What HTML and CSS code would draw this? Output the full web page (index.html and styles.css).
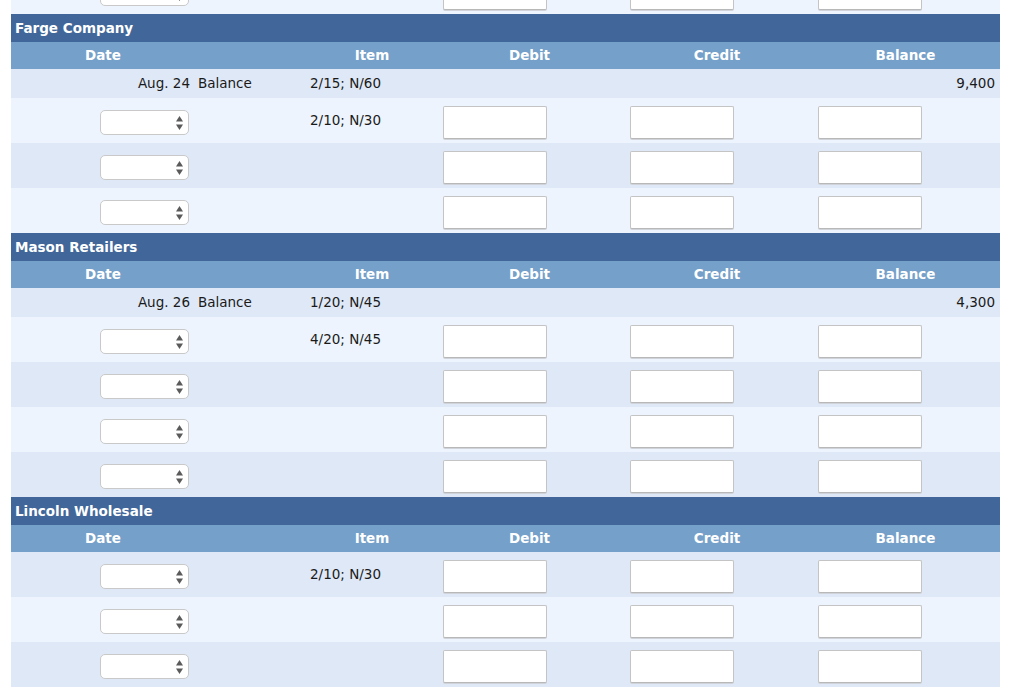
FILE: index.html
```html
<!DOCTYPE html>
<html>
<head>
<meta charset="utf-8">
<link rel="stylesheet" href="styles.css">
</head>
<body>
<div class="page">
  <!-- tail of previous ledger -->
  <div class="ledger ledger-prev">
    <div class="row input-row light">
      <div class="cell date"><div class="select"><svg width="7" height="14" viewBox="0 0 7 14"><polygon points="3.5,0 7,5.5 0,5.5" fill="#5a5a5a"/><polygon points="0,8.5 7,8.5 3.5,14" fill="#5a5a5a"/></svg></div></div>
      <div class="cell expl"></div>
      <div class="cell item"></div>
      <div class="cell amt"><div class="input"></div></div>
      <div class="cell amt"><div class="input"></div></div>
      <div class="cell amt"><div class="input"></div></div>
    </div>
  </div>

  <div class="ledger">
    <div class="title">Farge Company</div>
    <div class="row head">
      <div class="cell date">Date</div>
      <div class="cell expl"></div>
      <div class="cell item">Item</div>
      <div class="cell amt">Debit</div>
      <div class="cell amt">Credit</div>
      <div class="cell amt">Balance</div>
    </div>
    <div class="row bal-row dark">
      <div class="cell date">Aug. 24</div>
      <div class="cell expl">Balance</div>
      <div class="cell item">2/15; N/60</div>
      <div class="cell amt"></div>
      <div class="cell amt"></div>
      <div class="cell amt num">9,400</div>
    </div>
    <div class="row input-row light">
      <div class="cell date"><div class="select"><svg width="7" height="14" viewBox="0 0 7 14"><polygon points="3.5,0 7,5.5 0,5.5" fill="#5a5a5a"/><polygon points="0,8.5 7,8.5 3.5,14" fill="#5a5a5a"/></svg></div></div>
      <div class="cell expl"></div>
      <div class="cell item">2/10; N/30</div>
      <div class="cell amt"><div class="input"></div></div>
      <div class="cell amt"><div class="input"></div></div>
      <div class="cell amt"><div class="input"></div></div>
    </div>
    <div class="row input-row dark">
      <div class="cell date"><div class="select"><svg width="7" height="14" viewBox="0 0 7 14"><polygon points="3.5,0 7,5.5 0,5.5" fill="#5a5a5a"/><polygon points="0,8.5 7,8.5 3.5,14" fill="#5a5a5a"/></svg></div></div>
      <div class="cell expl"></div>
      <div class="cell item"></div>
      <div class="cell amt"><div class="input"></div></div>
      <div class="cell amt"><div class="input"></div></div>
      <div class="cell amt"><div class="input"></div></div>
    </div>
    <div class="row input-row light">
      <div class="cell date"><div class="select"><svg width="7" height="14" viewBox="0 0 7 14"><polygon points="3.5,0 7,5.5 0,5.5" fill="#5a5a5a"/><polygon points="0,8.5 7,8.5 3.5,14" fill="#5a5a5a"/></svg></div></div>
      <div class="cell expl"></div>
      <div class="cell item"></div>
      <div class="cell amt"><div class="input"></div></div>
      <div class="cell amt"><div class="input"></div></div>
      <div class="cell amt"><div class="input"></div></div>
    </div>
  </div>

  <div class="ledger">
    <div class="title">Mason Retailers</div>
    <div class="row head">
      <div class="cell date">Date</div>
      <div class="cell expl"></div>
      <div class="cell item">Item</div>
      <div class="cell amt">Debit</div>
      <div class="cell amt">Credit</div>
      <div class="cell amt">Balance</div>
    </div>
    <div class="row bal-row dark">
      <div class="cell date">Aug. 26</div>
      <div class="cell expl">Balance</div>
      <div class="cell item">1/20; N/45</div>
      <div class="cell amt"></div>
      <div class="cell amt"></div>
      <div class="cell amt num">4,300</div>
    </div>
    <div class="row input-row light">
      <div class="cell date"><div class="select"><svg width="7" height="14" viewBox="0 0 7 14"><polygon points="3.5,0 7,5.5 0,5.5" fill="#5a5a5a"/><polygon points="0,8.5 7,8.5 3.5,14" fill="#5a5a5a"/></svg></div></div>
      <div class="cell expl"></div>
      <div class="cell item">4/20; N/45</div>
      <div class="cell amt"><div class="input"></div></div>
      <div class="cell amt"><div class="input"></div></div>
      <div class="cell amt"><div class="input"></div></div>
    </div>
    <div class="row input-row dark">
      <div class="cell date"><div class="select"><svg width="7" height="14" viewBox="0 0 7 14"><polygon points="3.5,0 7,5.5 0,5.5" fill="#5a5a5a"/><polygon points="0,8.5 7,8.5 3.5,14" fill="#5a5a5a"/></svg></div></div>
      <div class="cell expl"></div>
      <div class="cell item"></div>
      <div class="cell amt"><div class="input"></div></div>
      <div class="cell amt"><div class="input"></div></div>
      <div class="cell amt"><div class="input"></div></div>
    </div>
    <div class="row input-row light">
      <div class="cell date"><div class="select"><svg width="7" height="14" viewBox="0 0 7 14"><polygon points="3.5,0 7,5.5 0,5.5" fill="#5a5a5a"/><polygon points="0,8.5 7,8.5 3.5,14" fill="#5a5a5a"/></svg></div></div>
      <div class="cell expl"></div>
      <div class="cell item"></div>
      <div class="cell amt"><div class="input"></div></div>
      <div class="cell amt"><div class="input"></div></div>
      <div class="cell amt"><div class="input"></div></div>
    </div>
    <div class="row input-row dark">
      <div class="cell date"><div class="select"><svg width="7" height="14" viewBox="0 0 7 14"><polygon points="3.5,0 7,5.5 0,5.5" fill="#5a5a5a"/><polygon points="0,8.5 7,8.5 3.5,14" fill="#5a5a5a"/></svg></div></div>
      <div class="cell expl"></div>
      <div class="cell item"></div>
      <div class="cell amt"><div class="input"></div></div>
      <div class="cell amt"><div class="input"></div></div>
      <div class="cell amt"><div class="input"></div></div>
    </div>
  </div>

  <div class="ledger">
    <div class="title">Lincoln Wholesale</div>
    <div class="row head">
      <div class="cell date">Date</div>
      <div class="cell expl"></div>
      <div class="cell item">Item</div>
      <div class="cell amt">Debit</div>
      <div class="cell amt">Credit</div>
      <div class="cell amt">Balance</div>
    </div>
    <div class="row input-row dark">
      <div class="cell date"><div class="select"><svg width="7" height="14" viewBox="0 0 7 14"><polygon points="3.5,0 7,5.5 0,5.5" fill="#5a5a5a"/><polygon points="0,8.5 7,8.5 3.5,14" fill="#5a5a5a"/></svg></div></div>
      <div class="cell expl"></div>
      <div class="cell item">2/10; N/30</div>
      <div class="cell amt"><div class="input"></div></div>
      <div class="cell amt"><div class="input"></div></div>
      <div class="cell amt"><div class="input"></div></div>
    </div>
    <div class="row input-row light">
      <div class="cell date"><div class="select"><svg width="7" height="14" viewBox="0 0 7 14"><polygon points="3.5,0 7,5.5 0,5.5" fill="#5a5a5a"/><polygon points="0,8.5 7,8.5 3.5,14" fill="#5a5a5a"/></svg></div></div>
      <div class="cell expl"></div>
      <div class="cell item"></div>
      <div class="cell amt"><div class="input"></div></div>
      <div class="cell amt"><div class="input"></div></div>
      <div class="cell amt"><div class="input"></div></div>
    </div>
    <div class="row input-row dark">
      <div class="cell date"><div class="select"><svg width="7" height="14" viewBox="0 0 7 14"><polygon points="3.5,0 7,5.5 0,5.5" fill="#5a5a5a"/><polygon points="0,8.5 7,8.5 3.5,14" fill="#5a5a5a"/></svg></div></div>
      <div class="cell expl"></div>
      <div class="cell item"></div>
      <div class="cell amt"><div class="input"></div></div>
      <div class="cell amt"><div class="input"></div></div>
      <div class="cell amt"><div class="input"></div></div>
    </div>
  </div>
</div>
</body>
</html>
```
FILE: styles.css
```css
html, body {
  margin: 0;
  padding: 0;
  background: #ffffff;
}

body {
  font-family: "DejaVu Sans", sans-serif;
  font-size: 13.5px;
  color: #1a1a1a;
}

.page {
  width: 989px;
  margin-left: 11px;
  margin-top: -31px;
}

.title {
  height: 28px;
  background: #41679a;
  color: #ffffff;
  font-family: "DejaVu Sans", sans-serif;
  font-weight: bold;
  font-size: 13.5px;
  display: flex;
  align-items: center;
  padding-left: 4px;
  padding-bottom: 1px;
  box-sizing: border-box;
}

.row {
  display: grid;
  grid-template-columns: 184px 113px 128px 187px 188px 189px;
  align-items: center;
}

.head {
  height: 27px;
  background: #75a0c9;
  color: #ffffff;
  font-weight: bold;
}

.head .cell {
  text-align: center;
  padding-bottom: 2px;
}

.bal-row {
  height: 29px;
}

.bal-row .cell {
  padding-bottom: 2px;
}

.input-row {
  height: 45px;
}

.input-row .item {
  padding-bottom: 2px;
}

.dark {
  background: #dfe8f6;
}

.light {
  background: #edf4fd;
}

.bal-row .date {
  text-align: right;
  padding-right: 5px;
  white-space: nowrap;
}

.bal-row .expl {
  padding-left: 3px;
}

.item {
  padding-left: 2px;
  white-space: nowrap;
}

.head .item,
.head .date {
  padding-left: 0;
  padding-right: 0;
}

.num {
  text-align: right;
  padding-right: 5px;
}

.input-row .date {
  display: flex;
  justify-content: flex-end;
  padding-right: 6px;
}

.input-row .amt {
  padding-left: 7px;
}

.select {
  width: 89px;
  height: 25px;
  box-sizing: border-box;
  border: 1px solid #c9c9c9;
  border-radius: 5px;
  background: #ffffff;
  display: flex;
  align-items: center;
  justify-content: flex-end;
  padding-right: 5px;
  margin-top: 4px;
}

.input {
  width: 104px;
  height: 33px;
  box-sizing: border-box;
  border: 1px solid #c4c4c4;
  border-bottom-color: #b8b8b8;
  border-radius: 2px;
  background: #ffffff;
  box-shadow: 0 1px 0 #d0d4da;
  margin-top: 3px;
}
```
